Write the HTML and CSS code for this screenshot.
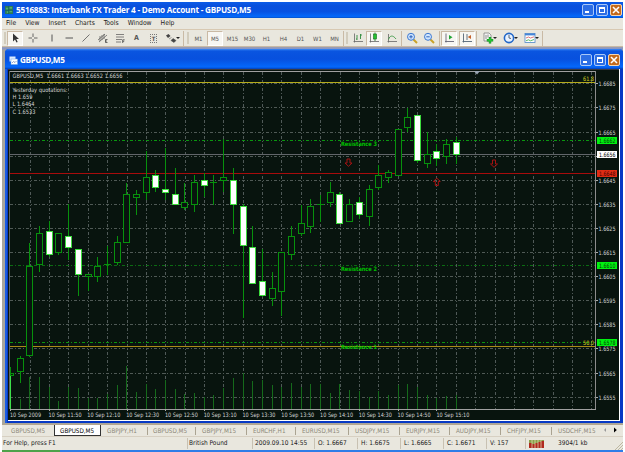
FILE: index.html
```html
<!DOCTYPE html>
<html lang="en">
<head>
<meta charset="UTF-8" />
<meta name="viewport" content="width=device-width, initial-scale=1.0" />
<title>Interbank FX Trader 4</title>
<link rel="stylesheet" href="styles.css">
</head>
<body>
<div class="app">
  <div class="titlebar">
    <svg class="app-icon" viewBox="0 0 9 9"><rect width="9" height="9" fill="#2a7a58"/><path d="M1 2h3v2H1zM5 1h3v2H5zM2 6h2v2H2zM5 5h3v2H5z" fill="#4fae6c"/><path d="M4 0v9M0 5h9" stroke="#155a60" stroke-width=".7"/></svg>
    <span class="title-text">5516883: Interbank FX Trader 4 - Demo Account - GBPUSD,M5</span>
    <div class="win-buttons">
      <span class="wb"><i class="min"></i></span>
      <span class="wb"><i class="max"></i></span>
      <span class="wb close"><svg viewBox="0 0 10 10"><path d="M2 2l6 6M8 2l-6 6" stroke="#fff" stroke-width="1.6"/></svg></span>
    </div>
  </div>

  <div class="menu">
    <span>File</span><span>View</span><span>Insert</span><span>Charts</span><span>Tools</span><span>Window</span><span>Help</span>
  </div>

  <div class="toolbar">
    <i class="grip"></i>
    <span class="tb on"><svg viewBox="0 0 12 12"><path d="M4 1.5v8l2-2 1.5 3 1.2-.6L7.300 7H10z" fill="#333"/></svg></span>
    <span class="tb"><svg viewBox="0 0 12 12"><path d="M6 1.500v3.500M6 7v3.500M1.500 6H5M7 6h3.500" stroke="#555" stroke-width=".9"/></svg></span>
    <i class="sep first"></i>
    <span class="tb"><svg viewBox="0 0 12 12"><path d="M6 2.500v7" stroke="#555"/></svg></span>
    <span class="tb"><svg viewBox="0 0 12 12"><path d="M2.500 6h7.500" stroke="#555"/></svg></span>
    <span class="tb"><svg viewBox="0 0 12 12"><path d="M2.500 9.500l7-7" stroke="#555" stroke-width=".8"/></svg></span>
    <span class="tb"><svg viewBox="0 0 12 12"><path d="M1 8l7-6M2 10l8-7M3 4v5M5 3v5M7 2v5" stroke="#555" stroke-width=".7"/><path d="M10.500 7.500H8.500v3h2M8.500 9h1.500" stroke="#333" fill="none" stroke-width=".7"/></svg></span>
    <span class="tb"><svg viewBox="0 0 12 12"><path d="M2 2.500h8M2 5h8M2 7.500h6M2 10h5" stroke="#666" stroke-width=".8"/><path d="M8.700 11V7.800h2M8.700 9.300h1.500" stroke="#333" fill="none" stroke-width=".7"/></svg></span>
    <span class="tb letter">A</span>
    <span class="tb letter"><b class="tbox">T</b></span>
    <span class="tb wide"><svg viewBox="0 0 12 12"><path d="M1 3.500L3.500 2l2 2-2.500 2z" fill="#444"/><path d="M4 7l2.500-1.500M6 8.500l2-2 3 2-2 2z" fill="#444" stroke="#444" stroke-width=".5"/></svg><i class="caret"></i></span>
    <i class="sep end"></i><i class="grip g2"></i>
    <span class="tb tf">M1</span><span class="tb tf on">M5</span><span class="tb tf">M15</span><span class="tb tf">M30</span><span class="tb tf">H1</span><span class="tb tf">H4</span><span class="tb tf">D1</span><span class="tb tf">W1</span><span class="tb tf">MN</span>
    <i class="sep"></i><i class="grip g3"></i>
    <span class="tb"><svg viewBox="0 0 12 12"><path d="M2.500 1.500v9M1.500 9.500H11" stroke="#666" stroke-width=".8"/><path d="M5 3v5M4 7h1M8.500 2v5M8.500 3H10" stroke="#2c8a3a" stroke-width=".9"/></svg></span>
    <span class="tb on"><svg viewBox="0 0 12 12"><path d="M2.500 1.500v9M1.500 9.500H11" stroke="#666" stroke-width=".8"/><path d="M7 .5v8.500" stroke="#176b1e" stroke-width=".8"/><rect x="5.500" y="2" width="3" height="5" fill="#25c02f" stroke="#176b1e" stroke-width=".6"/></svg></span>
    <span class="tb"><svg viewBox="0 0 12 12"><path d="M2.500 2v8.500M1.500 9.500H11" stroke="#666" stroke-width=".8"/><path d="M2.500 7.500C4 3 7 3 10 7" fill="none" stroke="#3f9a49" stroke-width=".9"/></svg></span>
    <i class="sep s1"></i>
    <span class="tb"><svg viewBox="0 0 12 12"><path d="M7.500 7.500l3.500 3.500" stroke="#c9a227" stroke-width="1.900"/><circle cx="5" cy="4.800" r="3.500" fill="#cfe6ff" stroke="#3d78d0"/><path d="M3.300 4.800h3.400M5 3.100v3.400" stroke="#1f56b5" stroke-width=".9"/></svg></span>
    <span class="tb"><svg viewBox="0 0 12 12"><path d="M7.500 7.500l3.500 3.500" stroke="#c9a227" stroke-width="1.900"/><circle cx="5" cy="4.800" r="3.500" fill="#cfe6ff" stroke="#3d78d0"/><path d="M3.300 4.800h3.400" stroke="#1f56b5" stroke-width=".9"/></svg></span>
    <i class="sep s2"></i>
    <span class="tb on"><svg viewBox="0 0 12 12"><path d="M3 1.500v9M2 9.500h9" stroke="#667" stroke-width=".9"/><path d="M6 3v4.500l3.500-2.200z" fill="#22a535"/></svg></span>
    <span class="tb on lastpair"><svg viewBox="0 0 12 12"><path d="M2.500 1.500v9M1.500 9.500H11M6 2v6" stroke="#567" stroke-width=".9"/><path d="M10 3v4L6.700 5z" fill="#c4622c"/></svg></span>
    <i class="sep s3"></i>
    <span class="tb wide w2"><svg viewBox="0 0 12 12"><path d="M2 1h5l2 2v6H2z" fill="#f4f4f4" stroke="#777" stroke-width=".7"/><path d="M4 3v4M6 2.500v3" stroke="#666" stroke-width=".7"/><path d="M8 5v6.500M4.800 8.200h6.400" stroke="#138a20" stroke-width="2.400"/><path d="M8 5.500v5.500M5.200 8.200h5.600" stroke="#29cf35" stroke-width="1.300"/></svg><i class="caret"></i></span>
    <span class="tb wide w2"><svg viewBox="0 0 12 12"><circle cx="6" cy="6" r="4.600" fill="#e8f2ff" stroke="#2368c8" stroke-width="1.600"/><path d="M6 3v3l2 .5" fill="none" stroke="#345" stroke-width=".8"/></svg><i class="caret"></i></span>
    <span class="tb wide w2"><svg viewBox="0 0 12 12"><rect x="1" y="1.500" width="10" height="9" fill="#fff" stroke="#4b86c8" stroke-width=".8"/><path d="M1 2.500h10" stroke="#4484d8" stroke-width="1.800"/><path d="M2 6l2.500-1 2 1L10 4.800" stroke="#c44" fill="none" stroke-width=".7"/><path d="M2 8.800l2.500-1 2 1L10 7.500" stroke="#3a4" fill="none" stroke-width=".8"/></svg><i class="caret"></i></span>
    <i class="sep"></i>
  </div>

  <div class="workspace">
    <div class="child">
      <div class="child-title">
        <svg class="child-icon" viewBox="0 0 9 9"><rect x=".5" y=".5" width="6" height="5" fill="#dcecff"/><rect x="2" y="3" width="6.500" height="5.500" fill="#fff" stroke="#6ea3e8" stroke-width=".5"/><path d="M3 7l1.500-1.500L6 6.500l1.500-1.500" stroke="#56a" fill="none" stroke-width=".6"/></svg>
        <span class="title-text">GBPUSD,M5</span>
        <div class="win-buttons">
          <span class="wb"><i class="min"></i></span>
          <span class="wb"><i class="max"></i></span>
          <span class="wb close"><svg viewBox="0 0 10 10"><path d="M2 2l6 6M8 2l-6 6" stroke="#fff" stroke-width="1.600"/></svg></span>
        </div>
      </div>
      <svg id="chart" class="chart" viewBox="8 69 611 351"></svg>
    </div>
  </div>

  <div class="tabs">
    <span class="tab t0">GBPUSD,M5</span>
    <span class="tab active">GBPUSD,M5</span>
    <span class="tab t2">GBPJPY,H1</span>
    <span class="tab t3">GBPUSD,M5</span>
    <span class="tab t4">GBPJPY,M15</span>
    <span class="tab t5">EURCHF,H1</span>
    <span class="tab t6">EURUSD,M15</span>
    <span class="tab t7">USDJPY,M15</span>
    <span class="tab t8">EURJPY,M15</span>
    <span class="tab t9">AUDJPY,M15</span>
    <span class="tab t9">CHFJPY,M15</span>
    <span class="tab last">USDCHF,M15</span>
    <span class="scroll"><svg viewBox="0 0 16 6"><path d="M4 1v4L2 3z" fill="#999"/><path d="M12 .5v5L14.800 3z" fill="#000"/></svg></span>
  </div>

  <div class="status">
    <span class="cell help">For Help, press F1</span>
    <span class="cell symbol">British Pound</span>
    <span class="cell date">2009.09.10 14:55</span>
    <span class="cell">O: 1.6667</span>
    <span class="cell">H: 1.6675</span>
    <span class="cell">L: 1.6665</span>
    <span class="cell">C: 1.6671</span>
    <span class="cell vol">V: 157</span>
    <span class="cell traffic"><svg viewBox="0 0 15 8"><rect width="15" height="8" fill="#8aa04a"/><path d="M0 3h3v1h3V3h3V2h3V1h3v7H0z" fill="#b02a1e"/><path d="M3 0v8M6 0v8M9 0v8M12 0v8" stroke="#e9e4bb" stroke-width=".7"/></svg>3904/1 kb</span>
    <svg class="resize" viewBox="0 0 9 9"><path d="M1 9l8-8M4 9l5-5M7 9l2-2" stroke="#b8b29a" stroke-width=".9"/></svg>
  </div>
  <div class="taskbar"><i class="start"></i></div>
</div>
<script src="chart.js"></script>
</body>
</html>
```
FILE: styles.css
```css
*{box-sizing:border-box;}
body{margin:0;padding:2px 2px 0;width:625px;height:452px;overflow:hidden;background:#fff;font-family:"DejaVu Sans Condensed","DejaVu Sans",sans-serif;font-size:6.5px;color:#222;}
svg{display:block;}
.app{width:621px;height:450px;display:flex;flex-direction:column;background:#e9e7de;}

.titlebar{height:16px;flex:none;display:flex;align-items:center;padding:0 1px 0 3px;background:linear-gradient(#0b5ce8 0,#0a50dc 25%,#0752e2 60%,#0468fa 90%,#0450c8);}
.app-icon{width:8px;height:8px;margin-right:3px;}
.title-text{font-family:"Open Sans","Noto Sans",sans-serif;font-weight:bold;color:#fff;white-space:nowrap;line-height:12px;}
.titlebar .title-text{font-size:8.2px;letter-spacing:-.22px;}
.win-buttons{margin-left:auto;display:flex;gap:2px;}
.wb{position:relative;width:12px;height:12px;border:1px solid #a9c8f8;border-radius:2px;background:#2c6de4;}
.wb .min{position:absolute;left:2px;bottom:2px;width:4px;height:2px;background:#fff;}
.wb .max{position:absolute;left:2px;top:2px;width:6px;height:6px;border:1px solid #fff;border-top-width:2px;}
.wb.close{background:#c46a1c;border-color:#f3d6b4;}

.menu{height:12px;flex:none;display:flex;align-items:center;gap:9px;padding-left:4px;border-bottom:1px solid #d8c9b2;white-space:nowrap;line-height:11px;font-size:6.75px;}
.toolbar{height:17px;flex:none;display:flex;align-items:center;border-bottom:1px solid #c8b9a5;}
.tb{width:17px;height:15px;flex:none;display:flex;align-items:center;justify-content:center;color:#555;}
.tb svg{width:12px;height:12px;flex:none;}
.tb.on{background:#f7f6f2;border:1px solid #c9b9a4;border-right-color:#fff;border-bottom-color:#fff;width:16px;margin-right:1px;}
.tb.tf{font-size:6px;}
.tb.wide{width:20px;}
.tb.w2{width:21px;}
.letter{font-size:7px;font-weight:bold;}
.tbox{border:1px dotted #777;line-height:7px;padding:0 1px;font-size:6px;}
.caret{border:2px solid transparent;border-top-color:#222;border-bottom:0;margin-left:-1px;}
.grip{width:2px;height:12px;flex:none;margin:0 1px 0 2px;background:#d2ccbc;}
.sep{width:1px;height:15px;flex:none;background:#c9baa5;}
.sep.first{margin:0 1px 0 0;visibility:hidden;}
.sep.end{margin-left:1px;}
.g2{margin:0 1px 0 3px;}
.g3{margin:0 1px 0 2px;}
.s1{margin:0 1px;}
.s2{margin:0 1px 0 2px;}
.lastpair{margin-left:1px;}
.s3{margin:0 2px 0 0;}

.workspace{height:377px;flex:none;padding:2px 0 0 3px;background:linear-gradient(#9a9fb0,#8794c8 2px,#a9a69c 3px);}
.child{height:374px;background:linear-gradient(90deg,#0a3ed0,#2a7cf8 1px,#0638c4 2px,#0638c4);padding:0 3px;border-radius:4px 4px 0 0;overflow:hidden;display:flex;flex-direction:column;}
.child-title{height:20px;flex:none;display:flex;align-items:center;margin:0 -3px;padding:2px 3px 0 4px;background:linear-gradient(#3c8cf8 0,#0a55e0 2px,#0750de 50%,#0468fc 90%,#0440b8);}
.child-icon{width:9px;height:9px;margin-right:2px;}
.child-title .title-text{font-size:8.2px;letter-spacing:-.4px;}
.chart{width:612px;height:352px;flex:none;background:#08140e;border-bottom:1px solid #fff;border-right:1px solid #fff;}
.chart text{font-family:"DejaVu Sans Condensed","DejaVu Sans",sans-serif;font-size:6px;fill:#d6d6d6;}
.chart .level-name{fill:#00c000;font-weight:bold;}
.chart .fib{fill:#d8d820;}
.chart .tag-text{fill:#063806;}
.chart .tag-white{fill:#000;}
.chart .tag-red{fill:#400;}

.tabs{height:13px;flex:none;display:flex;border-top:1px solid #b4a690;border-bottom:1px solid #d7d0c2;line-height:11px;color:#8c8778;white-space:nowrap;font-size:6.3px;}
.tab{position:relative;flex:none;}
.tab:not(.active)::after{content:"";position:absolute;right:0;top:2px;width:1px;height:8px;background:#aaa391;}
.t0{width:52px;padding-left:9px;}
.tab.t0::after{display:none;}
.tab.active{width:47px;padding-left:5px;background:#fff;color:#000;border:1px solid #333;border-top:0;line-height:11px;}
.t2{width:47px;padding-left:6px;}
.t3{width:48px;padding-left:5px;}
.t4{width:51px;padding-left:6px;}
.t5{width:49px;padding-left:6px;}
.t6{width:53px;padding-left:6px;}
.t7{width:51px;padding-left:6px;}
.t8{width:50px;padding-left:6px;}
.t9{width:51px;padding-left:6px;}
.last{width:47px;padding-left:6px;}
.tab.last::after{display:none;}
.scroll{flex:1;padding:2px 2px 0 3px;}
.scroll svg{width:16px;height:6px;}

.status{height:13px;flex:none;display:flex;align-items:center;white-space:nowrap;line-height:11px;position:relative;}
.cell{width:43px;height:11px;flex:none;padding-left:3px;border-left:1px solid #c8c1b2;}
.cell.help{width:185px;padding-left:1px;border:0;}
.cell.symbol{width:65px;padding-left:1px;}
.cell.date{width:62px;padding-left:2px;}
.cell.vol{width:39px;}
.cell.traffic{width:90px;display:flex;align-items:center;gap:14px;}
.cell.traffic svg{width:15px;height:8px;}
.resize{position:absolute;right:0;bottom:0;width:9px;height:9px;}
.taskbar{height:2px;flex:none;background:#2f7de8;display:flex;}
.start{width:58px;height:2px;background:#4ea24a;}
```
FILE: chart.js
```js
const svg = document.getElementById("chart");
let out = "";

function line(x1, y1, x2, y2, color, extra) {
  out += `<line x1="${x1}" y1="${y1}" x2="${x2}" y2="${y2}" stroke="${color}" ${extra || ""}/>`;
}
function rect(x, y, w, h, fill, stroke) {
  out += `<rect x="${x}" y="${y}" width="${w}" height="${h}" fill="${fill}" stroke="${stroke || "none"}"/>`;
}
function text(x, y, s, w, cls) {
  out += `<text x="${x}" y="${y}" textLength="${w}" lengthAdjust="spacingAndGlyphs" class="${cls || ""}">${s}</text>`;
}
const px = v => Math.floor(v) + 0.5;
const bar = k => px(10.5 + 9.69 * k);

// grid
for (let i = 1; i <= 30; i++) line(px(10.8 + 19.37 * i), 72, px(10.8 + 19.37 * i), 409, "#505a58", 'stroke-dasharray="3 2 1 2"');
for (let i = 0; i < 14; i++) {
  const y = px(83.8 + 24.1 * i);
  line(10, y, 595, y, "#505a56", 'stroke-dasharray="3 2 1 2"');
  line(595, y, 598, y, "#aaa");
  if (i !== 3) text(598.5, y + 2, (1.6685 - i * 0.001).toFixed(4), 17);
}

// volume, top of each bar
const volumes = [368,399,377,377,387,401,387,388,398,398,394,385,366,392,384,389,380,389,394,393,397,395,388,378,373,381,380,385,387,383,387,384,384,393,384,390,391,397,391,395,385,384,387,395,398,396,395];
volumes.forEach((v, k) => line(bar(k), v, bar(k), 409, k ? "#156a1b" : "#3de04a"));

// horizontal levels
line(10, 82.5, 595, 82.5, "#b5ac1c");
[140.5, 265.5, 342.5].forEach((y, i) => line(10, y, 595, y, i === 1 ? "#0b6b12" : "#0a960f", 'stroke-dasharray="3 2 1 2"'));
line(10, 154.5, 595, 154.5, "#62666a");
line(10, 173.5, 595, 173.5, "#a80c0c");
line(10, 346.5, 595, 346.5, "#a88c18");

// high, body top, body bottom, low, filled
const candles = [
  [367,373,375,376,0],[356,358,371,383,0],[243,266,355,357,0],[226,233,264,272,0],[221,231,254,257,1],
  [233,233,252,255,0],[204,236,247,260,1],[249,249,274,296,1],[274,274,276,291,0],[257,266,276,282,0],
  [246,264,264,275,0],[236,242,262,265,0],[183,194,242,242,0],[190,194,197,215,0],[151,177,192,200,0],
  [170,175,187,192,1],[148,189,192,200,1],[168,194,204,205,1],[183,202,207,210,0],[175,182,204,212,0],
  [173,180,185,197,1],[175,182,182,205,0],[139,177,180,192,0],[168,180,204,234,1],[204,206,245,318,1],
  [226,247,283,284,1],[249,281,295,297,1],[272,288,298,306,0],[252,252,291,316,0],[226,236,254,260,0],
  [205,223,233,236,0],[199,206,226,233,0],[195,204,204,222,0],[182,192,202,207,0],[192,194,223,224,1],
  [199,204,221,222,0],[197,202,214,219,1],[185,189,216,226,0],[165,175,187,190,0],[170,172,177,183,0],
  [129,129,175,176,0],[108,117,127,132,0],[115,115,160,163,1],[132,154,163,168,0],[144,151,158,166,1],
  [139,144,156,164,0],[137,142,154,164,1]
];
candles.forEach(([h, t, b, l, filled], k) => {
  const x = bar(k);
  line(x, h, x, l, "#07910c");
  if (k === 0) rect(x, t + 0.5, 3, b - t, "#08140e", "#07910c");
  else if (t === b) line(x - 3.5, t + 0.5, x + 3.5, t + 0.5, "#07910c");
  else rect(x - 3, t + 0.5, 6, b - t, filled ? "#fff" : "#08140e", filled ? "#3ddc3d" : "#07910c");
});

// trade arrows
function arrow(x, y, up) {
  out += `<path transform="translate(${x} ${y})${up ? " scale(1 -1)" : ""}" d="M-1.500 -3.500h3v4h2L0 3.800L-3.500 .5h2z" fill="none" stroke="#a51212"/>`;
}
arrow(348.5, 162.5);
arrow(436.8, 182, true);
arrow(494, 163.500);

// frame of the plot
line(9, 71.5, 595, 71.5, "#a0a0a0");
line(9.5, 71, 9.5, 409, "#5f6664");
line(595.5, 71, 595.5, 410, "#8c8c8c");
line(10, 409.5, 596, 409.5, "#a0a0a0");
line(8, 69.5, 619, 69.5, "#3a3a40");
out += '<path d="M474 71h6l-3 3.500z" fill="#9aa6b4"/>';

// price tags
[[140, "1.6662", "#00f010", "tag-text"], [154, "1.6656", "#fff", "tag-white"], [173, "1.6648", "#e02c14", "tag-red"],
 [265, "1.6610", "#00f010", "tag-text"], [342, "1.6578", "#00f010", "tag-text"]].forEach(([y, s, color, cls]) => {
  rect(597, y - 3, 20, 7, color);
  text(599, y + 2.7, s, 16.5, cls);
});

text(12.500, 78, "GBPUSD,M5&#160; 1.6661 1.6663 1.6652 1.6656", 110);
text(12.500, 91.500, "Yesterday quotations:", 55);
text(12.500, 98.500, "H 1.659", 20);
text(12.500, 106, "L 1.6464", 22);
text(12.500, 113.500, "C 1.6533", 23);
text(341, 146, "Resistance 3", 36, "level-name");
text(341, 271, "Resistance 2", 36, "level-name");
text(341, 348.500, "Resistance 1", 36, "level-name");
text(583, 81, "61.8", 11, "fib");
text(583, 345, "50.0", 11, "fib");

// time axis
["10 Sep 2009", "10 Sep 11:50", "10 Sep 12:10", "10 Sep 12:30", "10 Sep 12:50", "10 Sep 13:10", "10 Sep 13:30",
 "10 Sep 13:50", "10 Sep 14:10", "10 Sep 14:30", "10 Sep 14:50", "10 Sep 15:10"].forEach((s, i) => {
  text(i ? 9.800 + 38.780 * i : 10, 417, s, i ? 33 : 31);
  line(px(10.8 + 38.740 * i), 409, px(10.8 + 38.740 * i), 411, "#aaa");
});

svg.innerHTML = out;
```
